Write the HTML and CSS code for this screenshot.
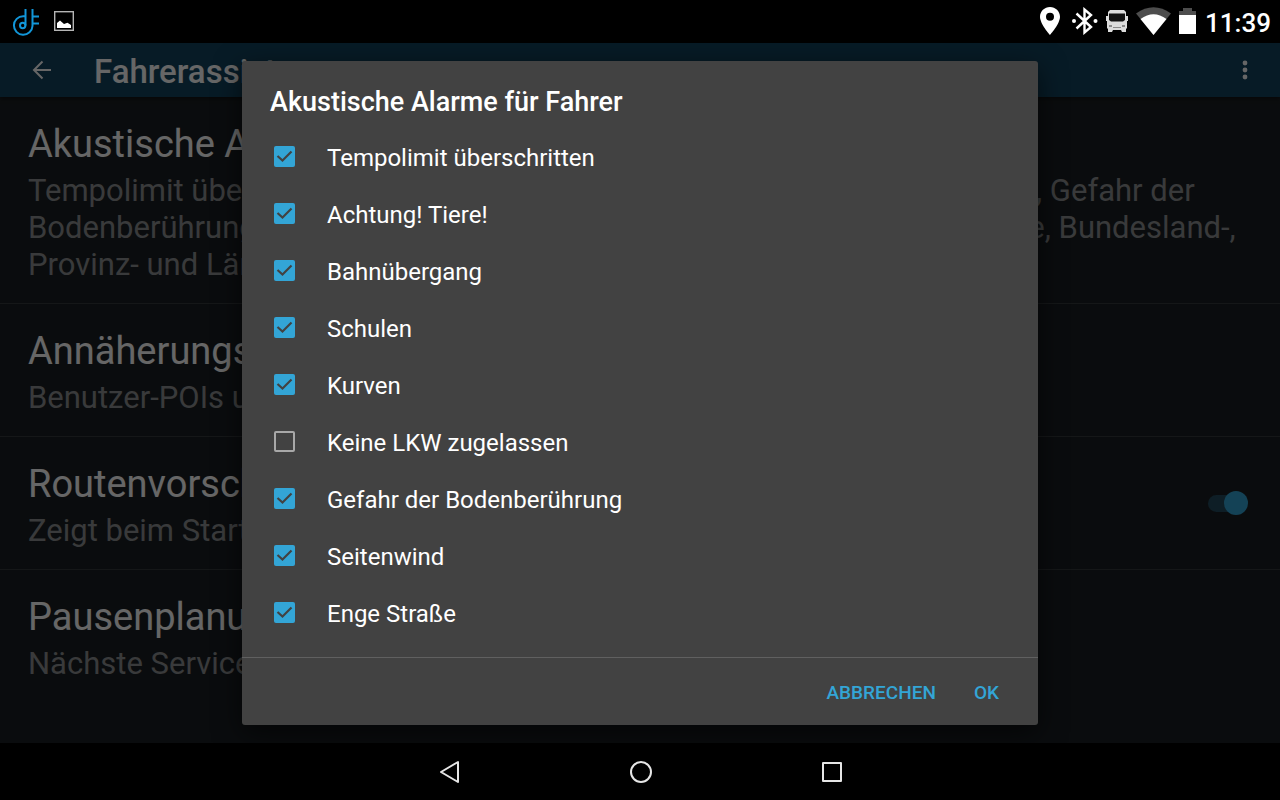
FILE: index.html
```html
<!DOCTYPE html>
<html lang="de">
<head>
    <meta charset="UTF-8">
    <meta name="viewport" content="width=device-width, initial-scale=1">
    <title>Fahrerassistenz</title>
    <link rel="stylesheet" href="styles.css">
</head>
<body>
    <!-- Status bar -->
    <div class="status-bar">
        <div class="status-left">
            <svg width="28" height="30" viewBox="0 0 28 30" fill="none" stroke="#1296d8" stroke-width="2">
                <path d="M13.500 3v16.500M20.500 3v17a9.300 9.300 0 1 1-9.300-9.800h2.300" />
                <circle cx="10.700" cy="19.500" r="2.700" />
                <path d="M20.500 10.500H27M20.500 17.500H27" />
            </svg>
            <svg width="20" height="20" viewBox="0 0 20 20">
                <rect x="0.700" y="0.700" width="18.600" height="18.600" fill="none" stroke="#b5b5b5" stroke-width="1.400" />
                <path d="M3 17v-5l3-2.500 4 3.500 3.500-1.200L17 14v3z" fill="#fff" />
            </svg>
        </div>
        <div class="status-right">
            <svg width="24" height="28" viewBox="0 0 24 28">
                <path fill="#fff" fill-rule="evenodd" d="M10 0C4.500 0 0 4.300 0 9.800 0 17 10 28 10 28s10-11 10-18.200C20 4.300 15.500 0 10 0zm0 13.700a4 4 0 1 1 0-8 4 4 0 0 1 0 8z" />
            </svg>
            <svg width="26" height="28" viewBox="0 0 26 28" fill="none" stroke="#fff" stroke-width="2.400">
                <path d="M4.500 6.500L19 20l-6.500 5.500V2.500L19 8 4.500 21.500" />
                <circle cx="2" cy="14" r="2" fill="#fff" stroke="none" />
                <circle cx="23.500" cy="14" r="2" fill="#fff" stroke="none" />
            </svg>
            <svg width="22" height="24" viewBox="0 0 22 24">
                <path fill="#dcdcdc" d="M4 1h14l2 2v4h2v5h-1v7l-1 1v3h-4l-1-2H7l-1 2H2v-3l-1-1v-7H0V7h2V3z" />
                <path fill="#111" d="M3 4.500h16v6.500l-2 1.500H5l-2-1.500z" />
                <path fill="#8a8a8a" d="M3 16h3v2H3zM16 16h3v2h-3zM7 18h8v1H7z" />
            </svg>
            <svg width="35" height="28" viewBox="0 0 35 28">
                <path fill="#4d4d4d" d="M0 6.500Q17.500-6 35 6.500L17.500 28z" />
                <path fill="#fff" d="M4.500 12Q17.500 2.500 30.500 12L17.500 28z" />
            </svg>
            <svg width="17" height="26" viewBox="0 0 17 26">
                <path fill="#4d4d4d" d="M4 0h9v3h4v6H0V3h4z" />
                <path fill="#fff" d="M0 7h17v19H0z" />
            </svg>
            <span class="clock">11:39</span>
        </div>
    </div>

    <div class="screen">
        <!-- App bar -->
        <header class="app-bar">
            <button type="button" class="icon-btn" aria-label="Zurück">
                <svg width="20" height="20" viewBox="0 0 20 20" fill="none" stroke="#fff" stroke-width="2">
                    <path d="M19 10H2M10.500 1.500L2 10l8.500 8.500" />
                </svg>
            </button>
            <h1 class="app-title">Fahrerassistenz</h1>
            <button type="button" class="icon-btn" aria-label="Mehr">
                <svg width="6" height="20" viewBox="0 0 6 20" fill="#fff">
                    <circle cx="3" cy="3" r="2.400" />
                    <circle cx="3" cy="10" r="2.400" />
                    <circle cx="3" cy="17" r="2.400" />
                </svg>
            </button>
        </header>

        <main class="settings">
            <section class="setting">
                <div>
                    <h2>Akustische Alarme für Fahrer</h2>
                    <p>Tempolimit überschritten, Achtung! Tiere! Bahnübergang, Schulen, Kurven, Gefahr der<br>Bodenberührung, Seitenwind, Enge Straße, Starkes Gefälle, Kantonsgrenze, Bundesland-,<br>Provinz- und Ländergrenzen</p>
                </div>
            </section>
            <section class="setting">
                <div>
                    <h2>Annäherungsalarme</h2>
                    <p>Benutzer-POIs und Kameras</p>
                </div>
            </section>
            <section class="setting">
                <label for="preview">
                    <span class="setting-title">Routenvorschau</span>
                    <span class="setting-text">Zeigt beim Start die Route an</span>
                </label>
                <input type="checkbox" id="preview" class="switch" checked>
            </section>
            <section class="setting">
                <div>
                    <h2>Pausenplanung</h2>
                    <p>Nächste Servicestationen</p>
                </div>
            </section>
        </main>

        <!-- Dialog -->
        <div class="overlay">
            <form class="dialog" role="dialog" aria-labelledby="dialog-title">
                <h2 class="dialog-title" id="dialog-title">Akustische Alarme für Fahrer</h2>
                <div class="options">
                    <label class="option"><input type="checkbox" checked>Tempolimit überschritten</label>
                    <label class="option"><input type="checkbox" checked>Achtung! Tiere!</label>
                    <label class="option"><input type="checkbox" checked>Bahnübergang</label>
                    <label class="option"><input type="checkbox" checked>Schulen</label>
                    <label class="option"><input type="checkbox" checked>Kurven</label>
                    <label class="option"><input type="checkbox">Keine LKW zugelassen</label>
                    <label class="option"><input type="checkbox" checked>Gefahr der Bodenberührung</label>
                    <label class="option"><input type="checkbox" checked>Seitenwind</label>
                    <label class="option"><input type="checkbox" checked>Enge Straße</label>
                </div>
                <div class="actions">
                    <button type="button" class="btn">ABBRECHEN</button>
                    <button type="button" class="btn">OK</button>
                </div>
            </form>
        </div>
    </div>

    <!-- Navigation bar -->
    <nav class="nav-bar">
        <button type="button" class="nav-btn" aria-label="Zurück">
            <svg width="22" height="24" viewBox="0 0 22 24" fill="none" stroke="#e6e6e6" stroke-width="2" stroke-linejoin="round">
                <path d="M19 2v20L2 12z" />
            </svg>
        </button>
        <button type="button" class="nav-btn" aria-label="Startseite">
            <svg width="24" height="24" viewBox="0 0 24 24" fill="none" stroke="#e6e6e6" stroke-width="2">
                <circle cx="12" cy="12" r="10" />
            </svg>
        </button>
        <button type="button" class="nav-btn" aria-label="Übersicht">
            <svg width="20" height="20" viewBox="0 0 20 20" fill="none" stroke="#e6e6e6" stroke-width="2" stroke-linejoin="round">
                <rect x="1" y="1" width="18" height="18" />
            </svg>
        </button>
    </nav>
</body>
</html>
```
FILE: styles.css
```css
* {
    box-sizing: border-box;
}

body {
    font-family: Roboto, "Noto Sans", sans-serif;
    background-color: #000;
    color: #fff;
    display: flex;
    flex-direction: column;
    min-height: 100vh;
    margin: 0;
}

h1, h2, p {
    margin: 0;
    font-weight: 400;
}

button {
    font-family: inherit;
    background: none;
    border: none;
    padding: 0;
    color: inherit;
    cursor: pointer;
}

svg {
    display: block;
}

/* Status bar */
.status-bar {
    display: flex;
    justify-content: space-between;
    height: 43px;
    padding: 0 9px 1px 12px;
}

.status-left,
.status-right {
    display: flex;
    align-items: center;
    gap: 8px;
}

.status-left {
    gap: 14px;
}

.clock {
    padding: 3px 0 0 1px;
    font-size: 26px;
    font-weight: 500;
}

/* App behind the dialog */
.screen {
    position: relative;
    flex: 1;
    background-color: #1b2023;
}

.app-bar {
    display: flex;
    align-items: center;
    height: 54px;
    padding: 0 32px;
    background-color: #12445f;
    box-shadow: 0 2px 4px rgba(0, 0, 0, 0.4);
}

.app-title {
    flex: 1;
    margin-left: 42px;
    padding-top: 2px;
    font-size: 33px;
    font-weight: 500;
}

.setting {
    display: flex;
    align-items: center;
    justify-content: space-between;
    padding: 24px 32px 20px 28px;
    border-bottom: 1px solid #363a3d;
}

.setting:last-child {
    border-bottom: none;
}

.setting h2,
.setting-title {
    display: block;
    margin-bottom: 5px;
    font-size: 38px;
    line-height: 46px;
}

.setting p,
.setting-text {
    display: block;
    font-size: 31px;
    line-height: 37px;
    color: #8f9193;
}

.switch {
    appearance: none;
    display: grid;
    align-items: center;
    width: 40px;
    height: 24px;
    margin: 0 0 4px;
}

.switch::before,
.switch::after {
    content: "";
    grid-area: 1 / 1;
}

.switch::before {
    width: 34px;
    height: 17px;
    border-radius: 9px;
    background-color: #234b5f;
}

.switch::after {
    justify-self: end;
    width: 24px;
    height: 24px;
    border-radius: 50%;
    background-color: #33a5d6;
}

/* Dialog */
.overlay {
    position: absolute;
    inset: 0;
    display: flex;
    align-items: center;
    justify-content: center;
    background-color: rgba(0, 0, 0, 0.6);
}

.dialog {
    width: 90%;
    max-width: 796px;
    background-color: #424242;
    border-radius: 3px;
    box-shadow: 0 8px 28px rgba(0, 0, 0, 0.6);
}

.dialog-title {
    padding: 25px 28px 11px;
    font-size: 27px;
    font-weight: 500;
    line-height: 32px;
}

.options {
    padding-bottom: 15px;
}

.option {
    display: flex;
    align-items: center;
    gap: 32px;
    height: 57px;
    padding: 0 32px;
    font-size: 24px;
}

.option input {
    appearance: none;
    width: 21px;
    height: 21px;
    margin: 0 0 2px;
    border: 2px solid #a8a8a8;
    border-radius: 2px;
}

.option input:checked {
    border: none;
    background: #33a5d6 url("data:image/svg+xml,%3Csvg xmlns='http://www.w3.org/2000/svg' viewBox='0 0 21 21'%3E%3Cpath d='M3.500 10l5 4.500 9-9' fill='none' stroke='%23424242' stroke-width='2.200'/%3E%3C/svg%3E");
}

.actions {
    display: flex;
    justify-content: flex-end;
    gap: 38px;
    padding: 23px 39px 21px;
    border-top: 1px solid #606060;
}

.btn {
    font-size: 19px;
    font-weight: 500;
    line-height: 23px;
    color: #33a5d6;
}

/* Navigation bar */
.nav-bar {
    display: flex;
    justify-content: center;
    height: 57px;
    padding-left: 2px;
}

.nav-btn {
    display: flex;
    align-items: center;
    justify-content: center;
    width: 191px;
}
```
